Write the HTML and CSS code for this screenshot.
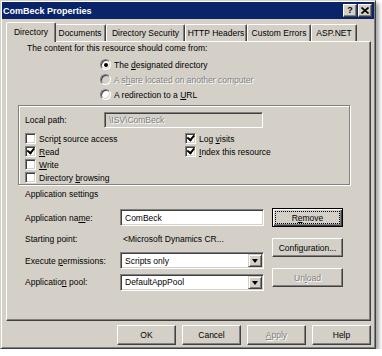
FILE: index.html
```html
<!DOCTYPE html>
<html lang="en">
<head>
  <meta charset="UTF-8">
  <title>ComBeck Properties</title>
  <link rel="stylesheet" href="styles.css">
</head>
<body>

<div class="dialog">
  <div class="titlebar">
    <span class="title">ComBeck Properties</span>
    <span class="tb-btns">
      <span class="tb-btn help">?</span>
      <span class="tb-btn">
        <svg width="8" height="7" viewBox="0 0 8 7"><path d="M0.5 0.5 L7.5 6.5 M7.5 0.5 L0.5 6.5" stroke="#000" stroke-width="1.6"/></svg>
      </span>
    </span>
  </div>

  <div class="tabs">
    <div class="tab active">Directory</div>
    <div class="tab">Documents</div>
    <div class="tab">Directory Security</div>
    <div class="tab">HTTP Headers</div>
    <div class="tab">Custom Errors</div>
    <div class="tab">ASP.NET</div>
  </div>

  <div class="panel">
    <div class="intro">The content for this resource should come from:</div>

    <div class="radios">
      <div class="radio"><span class="dot checked"></span><span>The <u>d</u>esignated directory</span></div>
      <div class="radio disabled"><span class="dot"></span><span>A s<u>h</u>are located on another computer</span></div>
      <div class="radio"><span class="dot"></span><span>A redirection to a <u>U</u>RL</span></div>
    </div>

    <div class="group">
      <div class="path-row">
        <span class="path-label">Local path:</span>
        <span class="field off">\ISV\ComBeck</span>
      </div>
      <div class="checks">
        <div class="col">
          <div class="check"><span class="box"></span><span>Scrip<u>t</u> source access</span></div>
          <div class="check"><span class="box on"></span><span><u>R</u>ead</span></div>
          <div class="check"><span class="box"></span><span><u>W</u>rite</span></div>
          <div class="check"><span class="box"></span><span>Directory <u>b</u>rowsing</span></div>
        </div>
        <div class="col">
          <div class="check"><span class="box on"></span><span>Log <u>v</u>isits</span></div>
          <div class="check"><span class="box on"></span><span><u>I</u>ndex this resource</span></div>
        </div>
      </div>
    </div>

    <div class="section">Application settings</div>

    <div class="app">
      <div class="app-grid">
        <span>Application na<u>m</u>e:</span>
        <span class="field">ComBeck</span>
        <span>Starting point:</span>
        <span class="plain">&lt;Microsoft Dynamics CR...</span>
        <span>Execute <u>p</u>ermissions:</span>
        <span class="field combo"><span class="val">Scripts only</span><span class="drop"></span></span>
        <span>Applicatio<u>n</u> pool:</span>
        <span class="field combo"><span class="val">DefaultAppPool</span><span class="drop"></span></span>
      </div>
      <div class="app-btns">
        <button class="btn wide default"><span class="focus"><span>R<u>e</u>move</span></span></button>
        <button class="btn wide">Confi<u>g</u>uration...</button>
        <button class="btn wide off">Un<u>l</u>oad</button>
      </div>
    </div>
  </div>

  <div class="footer">
    <button class="btn">OK</button>
    <button class="btn">Cancel</button>
    <button class="btn off"><u>A</u>pply</button>
    <button class="btn">Help</button>
  </div>
</div>

</body>
</html>
```

FILE: styles.css
```css
body {
  margin: 0;
  background-color: #fff;
  font-family: "Liberation Sans", Arial, sans-serif;
  font-size: 8.5px;
  color: #000;
}
u {
  text-underline-offset: 1px;
}
.dialog {
  width: 376px;
  height: 349px;
  box-sizing: border-box;
  padding: 1px;
  background-color: #d4d0c8;
  border: 1px solid;
  border-color: #d4d0c8 #404040 #404040 #d4d0c8;
  box-shadow: inset 1px 1px #fff, inset -1px -1px #808080, 3px 3px 4px rgba(0,0,0,0.35);
}
.titlebar {
  height: 17px;
  display: flex;
  align-items: center;
  justify-content: space-between;
  padding: 0 2px 0 1px;
  background-color: #0a246a;
  color: #fff;
}
.title {
  font-weight: bold;
  font-size: 9px;
}
.tb-btns {
  display: flex;
  gap: 1px;
}
.tb-btn {
  width: 12px;
  height: 11px;
  display: flex;
  align-items: center;
  justify-content: center;
  background-color: #d4d0c8;
  border: 1px solid;
  border-color: #fff #404040 #404040 #fff;
  box-shadow: inset -1px -1px #808080;
  color: #000;
}
.help {
  font-weight: bold;
  font-size: 9px;
  line-height: 11px;
}
.tabs {
  display: flex;
  align-items: flex-end;
  height: 19px;
  margin: 3px 0 0 4px;
}
.tab {
  height: 17px;
  box-sizing: border-box;
  padding: 0;
  text-align: center;
  white-space: nowrap;
  line-height: 16px;
  border: 1px solid;
  border-bottom: none;
  border-color: #fff #404040 transparent #fff;
  border-radius: 2px 2px 0 0;
  box-shadow: inset -1px 0 #808080;
}
.tab:nth-child(2) { width: 52px; }
.tab:nth-child(3) { width: 79px; }
.tab:nth-child(4) { width: 62px; }
.tab:nth-child(5) { width: 64px; }
.tab:nth-child(6) { width: 46px; }
.tab.active {
  width: 50px;
  height: 20px;
  margin-bottom: -1px;
  margin-right: -2px;
  line-height: 18px;
  position: relative;
  z-index: 1;
  background-color: #d4d0c8;
}
.tab.active + .tab {
  border-left-color: transparent;
}
.panel {
  width: 365px;
  height: 280px;
  box-sizing: border-box;
  margin-left: 4px;
  border: 1px solid;
  border-color: #fff #404040 #404040 #fff;
  box-shadow: inset -1px -1px #808080;
}
.intro {
  line-height: 11px;
  padding-left: 20px;
  margin-top: 1px;
}
.radios {
  margin: 3px 0 0 93px;
}
.radio {
  height: 15px;
  display: flex;
  align-items: center;
  gap: 3px;
}
.dot {
  width: 11px;
  height: 11px;
  box-sizing: border-box;
  border-radius: 50%;
  border: 1px solid;
  border-color: #808080 #fff #fff #808080;
  box-shadow: inset 1px 1px #404040, inset -1px -1px #d4d0c8;
  background-color: #fff;
  display: flex;
  align-items: center;
  justify-content: center;
}
.dot.checked::after {
  content: "";
  width: 4px;
  height: 4px;
  border-radius: 50%;
  background-color: #000;
}
.disabled,
.off {
  color: #808080;
  text-shadow: 1px 1px #fff;
}
.radio.disabled .dot {
  background-color: #d4d0c8;
}
.group {
  width: 332px;
  height: 80px;
  box-sizing: border-box;
  margin: 3px 0 0 11px;
  border: 1px solid #808080;
  box-shadow: inset 1px 1px #fff, 1px 1px #fff;
}
.path-row {
  display: flex;
  align-items: center;
  margin-top: 6px;
  padding-left: 6px;
}
.path-label {
  width: 79px;
}
.field {
  height: 16px;
  box-sizing: border-box;
  display: flex;
  align-items: center;
  padding-left: 4px;
  background-color: #fff;
  border: 1px solid;
  border-color: #808080 #fff #fff #808080;
  box-shadow: inset 1px 1px #404040, inset -1px -1px #d4d0c8;
}
.path-row .field {
  width: 159px;
}
.field.off {
  background-color: #d4d0c8;
}
.checks {
  display: flex;
  margin-top: 4px;
  padding-left: 6px;
}
.checks .col:first-child {
  width: 160px;
}
.check {
  height: 13px;
  display: flex;
  align-items: center;
  gap: 3px;
}
.box {
  width: 11px;
  height: 11px;
  box-sizing: border-box;
  border: 1px solid;
  border-color: #808080 #fff #fff #808080;
  box-shadow: inset 1px 1px #404040, inset -1px -1px #d4d0c8;
  background-color: #fff;
  position: relative;
}
.box.on::after {
  content: "";
  position: absolute;
  left: 2px;
  top: 1px;
  width: 5px;
  height: 3px;
  border-left: 2px solid #000;
  border-bottom: 2px solid #000;
  transform: rotate(-50deg);
  transform-origin: 40% 60%;
}
.section {
  line-height: 11px;
  margin-top: 4px;
  padding-left: 18px;
}
.app {
  display: flex;
  margin-top: 8px;
  padding-left: 18px;
}
.app-grid {
  display: grid;
  grid-template-columns: 95px 144px;
  grid-auto-rows: 17px;
  row-gap: 4.5px;
  align-items: center;
  margin-top: 1px;
}
.app-grid .field {
  height: 17px;
}
.plain {
  padding-left: 3px;
}
.combo {
  justify-content: space-between;
  padding-right: 1px;
}
.drop {
  width: 14px;
  height: 13px;
  box-sizing: border-box;
  background-color: #d4d0c8;
  border: 1px solid;
  border-color: #d4d0c8 #404040 #404040 #d4d0c8;
  box-shadow: inset 1px 1px #fff, inset -1px -1px #808080;
  display: flex;
  align-items: center;
  justify-content: center;
}
.drop::after {
  content: "";
  border-left: 3.5px solid transparent;
  border-right: 3.5px solid transparent;
  border-top: 4px solid #000;
  margin-top: 1px;
}
.app-btns {
  display: flex;
  flex-direction: column;
  gap: 11px;
  margin-left: 8px;
}
.btn {
  width: 59px;
  height: 20px;
  padding: 0;
  font: inherit;
  color: #000;
  background-color: #d4d0c8;
  border: 1px solid;
  border-color: #fff #404040 #404040 #fff;
  box-shadow: inset -1px -1px #808080;
}
.btn.wide {
  width: 71px;
  height: 19px;
}
.btn.off {
  color: #808080;
}
.btn.default {
  border-color: #000;
  box-shadow: inset 1px 1px #fff, inset -1px -1px #404040, inset -2px -2px #808080;
  padding: 2px;
}
.focus {
  display: flex;
  align-items: center;
  justify-content: center;
  height: 100%;
  box-sizing: border-box;
  border: 1px dotted #000;
}
.footer {
  display: flex;
  justify-content: flex-end;
  gap: 6px;
  margin-top: 4px;
  padding-right: 3px;
}
```
